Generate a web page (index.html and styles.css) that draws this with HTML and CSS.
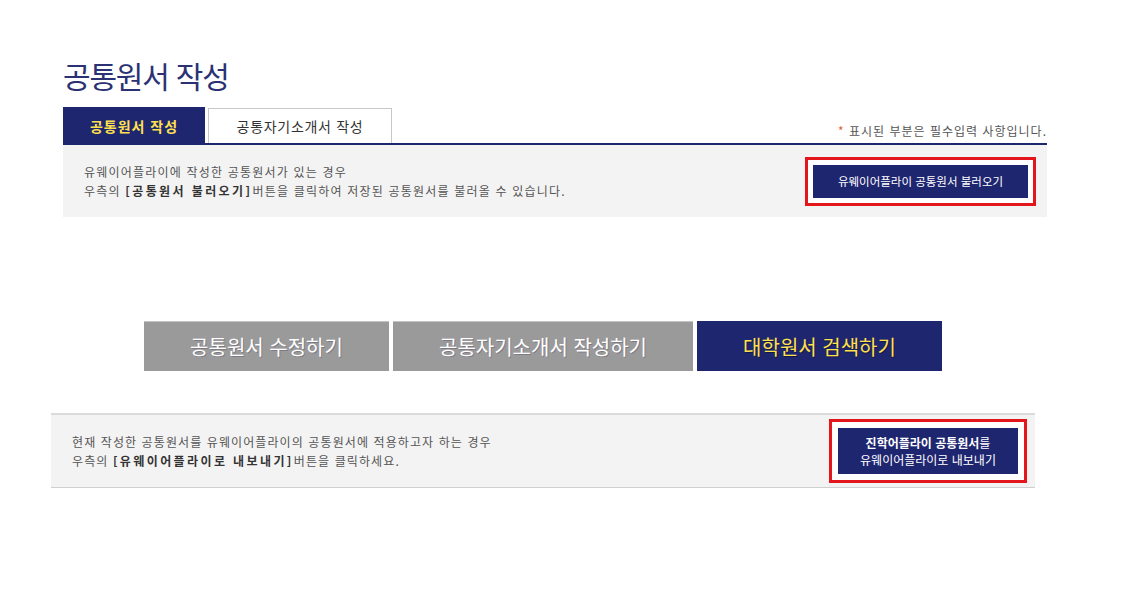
FILE: index.html
```html
<!DOCTYPE html>
<html lang="ko">
<head>
    <meta charset="UTF-8">
    <meta name="viewport" content="width=device-width, initial-scale=1.0">
    <title>공통원서 작성</title>
    <link rel="stylesheet" href="styles.css">
</head>
<body>
    <div class="page">
        <div class="top">
            <h1 class="title">공통원서 작성</h1>
            <div class="tab-row">
                <ul class="tabs">
                    <li class="tab active">공통원서 작성</li>
                    <li class="tab">공통자기소개서 작성</li>
                </ul>
                <p class="required"><span class="star">*</span> 표시된 부분은 필수입력 사항입니다.</p>
            </div>
            <div class="info-box">
                <p class="info-text">
                    유웨이어플라이에 작성한 공통원서가 있는 경우<br>
                    우측의 <strong>[공통원서 불러오기]</strong>버튼을 클릭하여 저장된 공통원서를 불러올 수 있습니다.
                </p>
                <div class="highlight">
                    <button type="button" class="navy-btn load-btn">유웨이어플라이 공통원서 불러오기</button>
                </div>
            </div>
        </div>

        <div class="bottom">
            <div class="action-row">
                <button type="button" class="big-btn gray">공통원서 수정하기</button>
                <button type="button" class="big-btn gray wide">공통자기소개서 작성하기</button>
                <button type="button" class="big-btn navy">대학원서 검색하기</button>
            </div>
            <div class="info-box export-box">
                <p class="info-text">
                    현재 작성한 공통원서를 유웨이어플라이의 공통원서에 적용하고자 하는 경우<br>
                    우측의 <strong>[유웨이어플라이로 내보내기]</strong>버튼을 클릭하세요.
                </p>
                <div class="highlight">
                    <button type="button" class="navy-btn export-btn"><strong>진학어플라이 공통원서</strong>를<br>유웨이어플라이로 내보내기</button>
                </div>
            </div>
        </div>
    </div>
</body>
</html>
```

FILE: styles.css
```css
body {
    margin: 0;
    padding: 0;
    background: #fff;
    color: #555;
    font-family: "Noto Sans CJK KR", "Noto Sans", sans-serif;
    font-size: 12px;
}
.page {
    padding-top: 55px;
}
.top {
    margin-left: 63px;
    width: 984px;
}
.title {
    margin: 0;
    height: 40px;
    line-height: 40px;
    font-size: 30px;
    font-weight: 400;
    color: #2b3273;
    letter-spacing: -1.2px;
}
.tab-row {
    display: flex;
    justify-content: space-between;
    align-items: flex-end;
    margin-top: 12px;
    border-bottom: 2px solid #1f2670;
}
.tabs {
    display: flex;
    align-items: flex-end;
    margin: 0;
    padding: 0;
    list-style: none;
}
.tab {
    box-sizing: border-box;
    width: 184px;
    height: 35px;
    margin-left: 3px;
    border: 1px solid #c8c8c8;
    border-bottom: none;
    background: #fff;
    color: #333;
    font-size: 14px;
    line-height: 34px;
    letter-spacing: 0.7px;
    text-align: center;
}
.tab.active {
    width: 142px;
    height: 36px;
    margin-left: 0;
    border: none;
    background: #1f2670;
    color: #ffe14d;
    font-weight: bold;
    line-height: 38px;
    letter-spacing: 1px;
}
.required {
    margin: 0 0 4px;
    font-size: 12px;
    letter-spacing: 1px;
    color: #555;
}
.star {
    color: #e8603c;
}
.info-box {
    display: flex;
    justify-content: space-between;
    align-items: center;
    height: 72px;
    padding: 0 11px 0 21px;
    background: #f3f3f3;
}
.info-text {
    margin: 0;
    line-height: 19px;
    letter-spacing: 1.2px;
    color: #555;
}
.info-text strong {
    color: #333;
    letter-spacing: 2.4px;
}
.highlight {
    border: 3px solid #e3161b;
    padding: 5px;
    background: #fff;
}
.navy-btn {
    display: block;
    border: none;
    background: #1f2670;
    color: #fff;
    font-family: inherit;
    font-size: 12px;
    cursor: pointer;
}
.load-btn {
    width: 215px;
    height: 33px;
    font-size: 11.5px;
}
.bottom {
    margin-left: 51px;
    width: 984px;
}
.action-row {
    display: flex;
    justify-content: center;
    gap: 4px;
    margin-top: 104px;
}
.big-btn {
    width: 245px;
    height: 50px;
    border: none;
    font-family: inherit;
    font-size: 20px;
    cursor: pointer;
}
.big-btn.wide {
    width: 300px;
}
.big-btn.gray {
    background: #9a9a9a;
    border-top: 1px solid #c4c4c4;
    color: #fff;
    text-shadow: 1px 1px 0 rgba(80, 60, 90, 0.35);
}
.big-btn.navy {
    background: #1f2670;
    color: #ffe14d;
    text-shadow: 1px 1px 0 rgba(0, 0, 0, 0.4);
}
.export-box {
    box-sizing: border-box;
    height: 75px;
    margin-top: 42px;
    padding-right: 8px;
    border-top: 2px solid #dadada;
    border-bottom: 1px solid #cfcfcf;
}
.export-box .info-text {
    letter-spacing: 1.1px;
}
.export-box .highlight {
    padding: 6px;
}
.export-btn {
    width: 180px;
    height: 46px;
    padding: 0;
    line-height: 17px;
}
```
